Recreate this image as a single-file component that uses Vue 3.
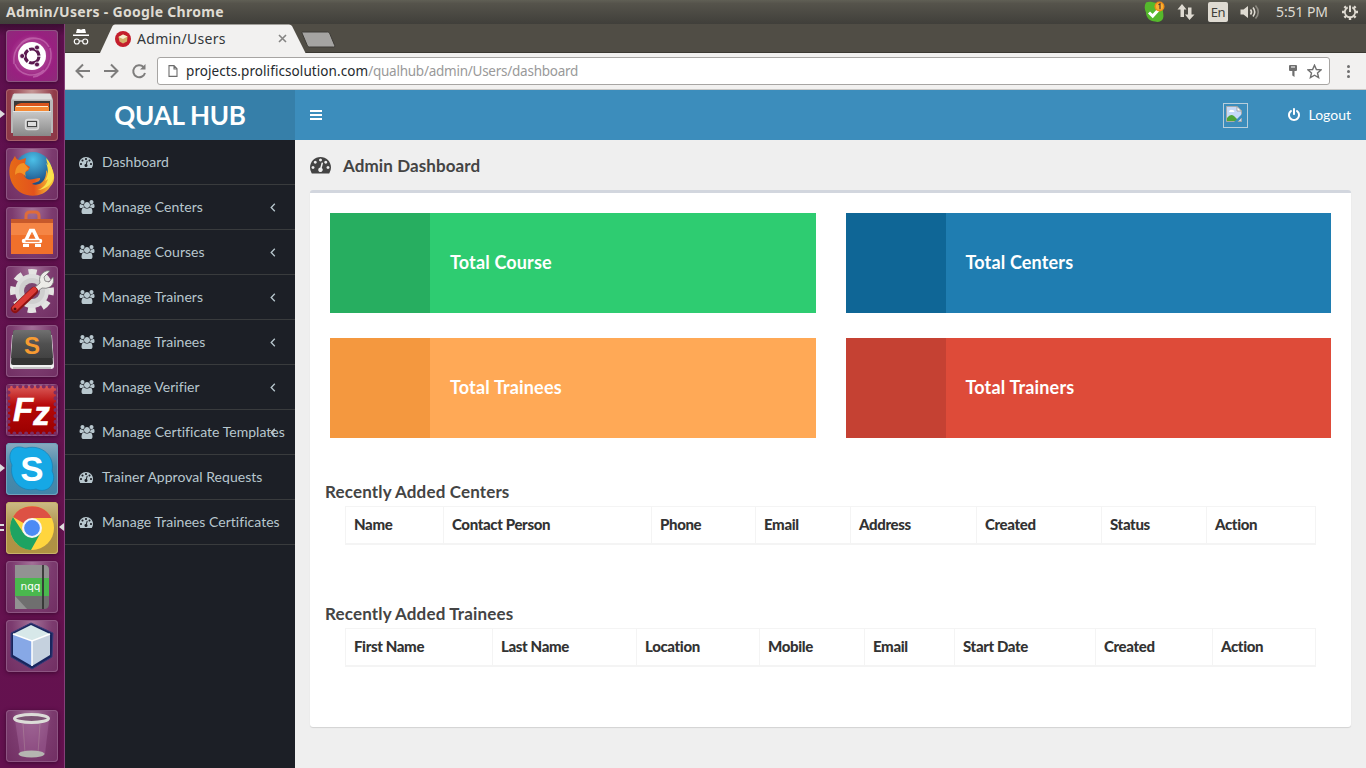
<script setup>
const menu = [
  { label: 'Dashboard', icon: 'gauge' },
  { label: 'Manage Centers', icon: 'group', sub: true },
  { label: 'Manage Courses', icon: 'group', sub: true },
  { label: 'Manage Trainers', icon: 'group', sub: true },
  { label: 'Manage Trainees', icon: 'group', sub: true },
  { label: 'Manage Verifier', icon: 'group', sub: true },
  { label: 'Manage Certificate Templates', icon: 'group', sub: true },
  { label: 'Trainer Approval Requests', icon: 'gauge' },
  { label: 'Manage Trainees Certificates', icon: 'gauge' },
]
const cards = [
  { label: 'Total Course', tone: 'green' },
  { label: 'Total Centers', tone: 'blue' },
  { label: 'Total Trainees', tone: 'orange' },
  { label: 'Total Trainers', tone: 'red' },
]
const centers = ['Name', 'Contact Person', 'Phone', 'Email', 'Address', 'Created', 'Status', 'Action']
const trainees = ['First Name', 'Last Name', 'Location', 'Mobile', 'Email', 'Start Date', 'Created', 'Action']
const gauge = 'M384 1152q0-53-37.5-90.5t-90.5-37.5-90.5 37.5-37.5 90.5 37.5 90.5 90.5 37.5 90.5-37.5 37.5-90.5zm192-448q0-53-37.5-90.5t-90.5-37.5-90.5 37.5-37.5 90.5 37.5 90.5 90.5 37.5 90.5-37.5 37.5-90.5zm428 481l101-382q6-26-7.5-48.5t-38.5-29.5-48 6.5-30 39.5l-101 382q-60 5-107 43.5t-63 98.5q-20 77 20 146t117 89 146-20 89-117q16-60-6-117t-72-91zm660-33q0-53-37.5-90.5t-90.5-37.5-90.5 37.5-37.5 90.5 37.5 90.5 90.5 37.5 90.5-37.5 37.5-90.5zm-640-640q0-53-37.5-90.5t-90.5-37.5-90.5 37.5-37.5 90.5 37.5 90.5 90.5 37.5 90.5-37.5 37.5-90.5zm448 192q0-53-37.5-90.5t-90.5-37.5-90.5 37.5-37.5 90.5 37.5 90.5 90.5 37.5 90.5-37.5 37.5-90.5zm320 448q0 261-141 483-19 29-54 29h-1402q-35 0-54-29-141-221-141-483 0-182 71-348t191-286 286-191 348-71 348 71 286 191 191 286 71 348z'
const group = 'M657 896q-162 5-265 128h-134q-82 0-138-40.5t-56-118.5q0-353 124-353 6 0 43.5 21t97.5 42.5 119 21.5q67 0 133-23-5 37-5 66 0 159 90 293zm1071 637q0 120-73 189.5t-194 69.5h-874q-121 0-194-69.5t-73-189.5q0-53 3.5-103.5t14-109 26.5-108.5 43-97.5 62-81 85.5-53.5 111.5-20q10 0 43 21.5t73 48 107 48 135 21.5 135-21.5 107-48 73-48 43-21.5q61 0 111.5 20t85.5 53.5 62 81 43 97.5 26.5 108.5 14 109 3.5 103.5zm-1024-1277q0 106-75 181t-181 75-181-75-75-181 75-181 181-75 181 75 75 181zm704 384q0 159-112.5 271.5t-271.5 112.5-271.5-112.5-112.5-271.5 112.5-271.5 271.5-112.5 271.5 112.5 112.5 271.5zm576 225q0 78-56 118.5t-138 40.5h-134q-103-123-265-128 90-134 90-293 0-29-5-66 66 23 133 23 59 0 119-21.5t97.5-42.5 43.5-21q124 0 124 353zm-128-609q0 106-75 181t-181 75-181-75-75-181 75-181 181-75 181 75 75 181z'
const power = 'M1664 896q0 156-61 298t-164 245-245 164-298 61-298-61-245-164-164-245-61-298q0-182 80.5-343t226.5-270q43-32 95.5-25t83.5 50q32 42 24.5 94.5t-49.5 84.5q-98 74-151.5 181t-53.5 228q0 104 40.5 198.5t109.5 163.5 163.5 109.5 198.5 40.5 198.5-40.5 163.5-109.5 109.5-163.5 40.5-198.5q0-121-53.5-228t-151.5-181q-42-32-49.5-84.5t24.5-94.5q31-43 84-50t95 25q146 109 226.5 270t80.5 343zm-640-768v640q0 52-38 90t-90 38-90-38-38-90v-640q0-52 38-90t90-38 90 38 38 90z'
</script>

<template>
  <div class="desktop">
    <header class="panel">
      <span class="win-title">Admin/Users - Google Chrome</span>
      <div class="tray">
        <svg class="t-skype" width="24" height="24" viewBox="0 0 24 24">
          <path d="M4 2.500C7 1 10 2 12 2.500c5 0 9 4 9 9 0 2 1 4 0 7s-5 4-8 3c-5 0-9-4-9-9-1.500-3-2-7 0-10z" fill="#55b82c" />
          <path d="M7 12.500l3.700 3.500 6.500-7" fill="none" stroke="#fff" stroke-width="3" />
          <circle cx="17.500" cy="6.500" r="5" fill="#f08b16" /><circle cx="17.500" cy="6.500" r="3.600" fill="#f9b233" />
          <path d="M16.500 4.800l1.500-1v5.500" fill="none" stroke="#533" stroke-width="1.200" />
        </svg>
        <svg class="t-net" width="18" height="18" viewBox="0 0 18 18" fill="#dfdbd2">
          <path d="M5 1L0.500 6.500H3.500V14H7V6.500H9.500zM12.500 17l5-5.500H14.500V4.500H11V11.500H8z" />
        </svg>
        <span class="lang">En</span>
        <svg class="t-vol" width="20" height="16" viewBox="0 0 20 16" fill="none">
          <path d="M0.500 5.500H3.500L8 2V14L3.500 10.500H0.500z" fill="#dfdbd2" />
          <path d="M10.500 5.500q2 2.500 0 5M13 3.500q3.500 4.500 0 9" stroke="#dfdbd2" stroke-width="1.600" />
          <path d="M15.500 1.500q5.500 6.500 0 13" stroke="#8a877f" stroke-width="1.600" />
        </svg>
        <span class="clock">5:51 PM</span>
        <svg class="t-gear" width="16" height="16" viewBox="0 0 16 16" fill="none" stroke="#dfdbd2">
          <path d="M5.700 3.400A5.200 5.200 0 1 0 10.300 3.400" stroke-width="1.800" />
          <path d="M8 1.500V8" stroke-width="2" />
          <path d="M4 4L2.400 2.400M2.800 8H0M4 12L2.400 13.600M8 13.200V16M12 12l1.600 1.600M13.200 8H16M12 4l1.600-1.600" stroke-width="2.400" />
        </svg>
      </div>
    </header>

    <div class="workspace">
      <nav class="launcher">
        <div class="tile dash">
          <svg viewBox="0 0 52 52">
            <g fill="none" stroke="#d58ac4" opacity=".5"><path d="M8 34C6 18 18 6 34 9M44 18c4 14-4 27-17 29M15 13c8-8 23-6 28 4M38 40c-10 9-25 5-29-6" stroke-width="1.500" /></g>
            <circle cx="26" cy="26" r="14" fill="#fff" />
            <circle cx="26" cy="26" r="7" fill="none" stroke="#5b1950" stroke-width="3.200" stroke-dasharray="13.200 1.460" stroke-dashoffset="-.7" />
            <g fill="#5b1950" stroke="#fff" stroke-width=".8"><circle cx="16.200" cy="26" r="2.500" /><circle cx="31" cy="17.500" r="2.500" /><circle cx="31" cy="34.500" r="2.500" /></g>
          </svg>
        </div>
        <div class="tile files">
          <i class="pip"></i>
          <svg viewBox="0 0 52 52">
            <defs><linearGradient id="metal" x1="0" y1="0" x2="0" y2="1"><stop offset="0" stop-color="#c9c9c9" /><stop offset="1" stop-color="#898989" /></linearGradient></defs>
            <path d="M7 5h38l2 6v33H5V11z" fill="#b9b9b9" /><path d="M8 4.500h36l2 6H6z" fill="#dedede" />
            <path d="M8 12h36v12H8z" fill="#393939" />
            <path d="M12 15l3-1h28v8H9v-5z" fill="#d9541c" /><path d="M9 18h34v5H9z" fill="#f58a35" /><path d="M10 17.500h32" stroke="#fff0cf" />
            <path d="M7 22h38v25H7z" fill="url(#metal)" /><path d="M7 22.500h38" stroke="#e4e4e4" />
            <rect x="19.500" y="30.500" width="13" height="10" rx="2.500" fill="#bbb" stroke="#ddd" stroke-width="1.400" />
            <rect x="21.500" y="32.500" width="9" height="5" fill="#ddd" stroke="#444" />
          </svg>
        </div>
        <div class="tile">
          <svg viewBox="0 0 52 52">
            <defs>
              <radialGradient id="globe" cx=".5" cy=".2" r=".7"><stop offset="0" stop-color="#4cc0e8" /><stop offset="1" stop-color="#17447e" /></radialGradient>
              <linearGradient id="fox" x1="0" y1="0" x2="1" y2="0"><stop offset="0" stop-color="#e66a16" /><stop offset=".55" stop-color="#e3531c" /><stop offset="1" stop-color="#f9d33a" /></linearGradient>
            </defs>
            <circle cx="27" cy="23" r="19" fill="url(#globe)" />
            <path d="M5 14C7 12 8 9 9 8c1 3 3 4 5 4l6-2-1 6 5 3-2 4c-3 0-5 3-3 6 4 5 9 1 15 1 1 4-5 4-8 6 9 3 15-5 14-14 2 2 2 5 2 7 3-6 1-12-2-17 9 10 11 20 4 27-5 8-15 10-23 8C7 44 0 28 5 14z" fill="url(#fox)" />
            <path d="M40 15c3 6 2 13-1 18l3-2c-1 5-5 9-10 11 9-1 16-7 16-17l-1 2c0-7-3-13-7-17l2 7z" fill="#fae24c" />
            <path d="M9 27c4-4 8-2 11 2-2-6 1-7 3-8l-5-6c-5 0-9 4-9 12z" fill="#f39226" />
          </svg>
        </div>
        <div class="tile">
          <svg viewBox="0 0 52 52">
            <path d="M20 16V9q0-4 4-4h5q4 0 4 4v7" fill="none" stroke="#df6c3a" stroke-width="3" />
            <path d="M5 12h42v35H5z" fill="#f0702b" /><path d="M5 12h42v4H5z" fill="#c7592b" /><path d="M5 16h42v12H5z" fill="#f58545" />
            <path d="M20 33l4.500-9.500h3L32 33" fill="none" stroke="#fff" stroke-width="3.500" />
            <path d="M18 34h16" stroke="#fff" stroke-width="4.500" stroke-linecap="round" /><path d="M19.500 34h14" stroke="#f0702b" stroke-width="1.500" />
            <path d="M17 38.500h6M29 38.500h6" stroke="#fff" stroke-width="3" />
          </svg>
        </div>
        <div class="tile">
          <svg viewBox="0 0 52 52">
            <circle cx="26" cy="25" r="19" fill="none" stroke="#e4e4e2" stroke-width="6" stroke-dasharray="8.200 6.724" stroke-dashoffset="4.100" />
            <circle cx="26" cy="25" r="14" fill="#eee" stroke="#ddd" stroke-width="6" /><circle cx="26" cy="25" r="13" fill="#cfcfcf" /><circle cx="26" cy="25" r="8" fill="#7c4871" />
            <path d="M28 22l6-5q-2-7 4-11 3-2 6-1l-6 6 1 4 4 1 4-5q2 6-3 10-4 2-8 1l-5 4z" fill="#ecece8" stroke="#777" stroke-width=".8" />
            <path d="M9 43l19-18" stroke="#8e1212" stroke-width="8" stroke-linecap="round" /><path d="M9 42l19-18" stroke="#dc3b35" stroke-width="5.500" stroke-linecap="round" />
            <circle cx="9" cy="43" r="1.500" fill="#501010" />
          </svg>
        </div>
        <div class="tile">
          <svg viewBox="0 0 52 52">
            <defs><linearGradient id="slab" x1="0" y1="0" x2="0" y2="1"><stop offset="0" stop-color="#707070" /><stop offset=".5" stop-color="#505050" /><stop offset="1" stop-color="#424242" /></linearGradient></defs>
            <path d="M6 10h40l2 31q0 3-3 3H7q-3 0-3-3z" fill="#f1f1f1" /><path d="M7 43h38" stroke="#999" />
            <path d="M9 5h34q2 0 2 2l2 31q0 2-2 2H7q-2 0-2-2L7 7q0-2 2-2z" fill="#333" /><path d="M9 5h34q2 0 2 2l2 26H5L7 7q0-2 2-2z" fill="url(#slab)" />
            <text x="26" y="29" text-anchor="middle" class="glyph s-sub">S</text>
          </svg>
        </div>
        <div class="tile">
          <svg viewBox="0 0 52 52">
            <defs><linearGradient id="fz" x1="0" y1="0" x2="0" y2="1"><stop offset="0" stop-color="#da5a58" /><stop offset=".4" stop-color="#b60808" /><stop offset="1" stop-color="#9b0000" /></linearGradient></defs>
            <rect x="2" y="2" width="48" height="48" rx="2" fill="url(#fz)" />
            <rect x="2.500" y="2.500" width="47" height="47" fill="none" stroke="#7c2c62" stroke-width="4" stroke-dasharray="0 5.875" stroke-linecap="round" />
            <text x="7" y="37" class="glyph fz">F</text><text x="27.200" y="41" class="glyph fz z">z</text>
          </svg>
        </div>
        <div class="tile skype">
          <i class="pip"></i>
          <svg viewBox="0 0 52 52">
            <path d="M7 6c5-4 10-1 13-1C37 1 49 14 46 28c3 6 2 12-3 17-4 3-9 3-13 1C15 50 3 37 6 22 3 16 3 10 7 6z" fill="#16a8e5" stroke="#1680b4" stroke-width=".7" />
            <text x="26" y="38" text-anchor="middle" class="glyph s-sky">S</text>
          </svg>
        </div>
        <div class="tile chrome">
          <i class="pip double"></i><i class="pip focus"></i>
          <svg viewBox="0 0 52 52">
            <circle cx="26" cy="26" r="22" fill="#ffd53e" />
            <path d="M26 26L7 15A22 22 0 0 1 45.500 16H26z" fill="#dd5144" />
            <path d="M7 15A22 22 0 0 0 25 48L34.500 31H17.400z" fill="#1ea362" />
            <circle cx="26" cy="26" r="10" fill="#f5f5f5" /><circle cx="26" cy="26" r="7.900" fill="#4c8bf5" />
          </svg>
        </div>
        <div class="tile">
          <svg viewBox="0 0 52 52">
            <path d="M9 4h29q5 0 5 5v34q0 5-5 5H9z" fill="#6f6f6f" /><path d="M9 4h29q5 0 5 5v8H9z" fill="#929292" /><path d="M9 35l12 13H9z" fill="#929292" />
            <path d="M9 17h34v18H9z" fill="#4ab84e" /><path d="M37 4v44" stroke="#343434" stroke-width="1.800" />
            <text x="24.500" y="29" text-anchor="middle" class="glyph nqq">nqq</text>
          </svg>
        </div>
        <div class="tile">
          <svg viewBox="0 0 52 52">
            <path d="M25 3l22 10-1 24-20 12L5 37V13z" fill="#18265e" stroke="#3a3a78" stroke-linejoin="round" />
            <path d="M25 5l19 9-18 7L7 14z" fill="#d7e8e9" /><path d="M7 14l19 7v25L7 35z" fill="#87a8e6" /><path d="M26 21l18-7v21L26 46z" fill="#c5d1de" />
            <path d="M7 14l19 7 18-7M26 21v25" fill="none" stroke="#fff" stroke-width="1.500" />
          </svg>
        </div>
        <div class="tile trash">
          <svg viewBox="0 0 52 52">
            <path d="M9 10l5 34q12 5 25 0l4-34z" fill="#a4679b" opacity=".45" /><path d="M17 14l2 29M34 14l-2 29" stroke="#ddb" opacity=".2" />
            <ellipse cx="25.500" cy="44" rx="13" ry="3.500" fill="#b5b5b1" />
            <ellipse cx="25.500" cy="8.500" rx="17" ry="4" fill="#7b5272" stroke="#dcdcd8" stroke-width="3" />
          </svg>
        </div>
      </nav>

      <section class="browser">
        <div class="tabs">
          <svg class="incog" width="18" height="18" viewBox="0 0 18 18" fill="#fff">
            <path d="M5 0h2l2 .7L11 0h2l1 4H4zM1 5.500h16v1.500H1z" /><g fill="none" stroke="#fff" stroke-width="1.200"><circle cx="4.800" cy="12.500" r="2.500" /><circle cx="13.200" cy="12.500" r="2.500" /><path d="M7.500 12h3" /></g>
          </svg>
          <div class="tab">
            <svg class="tab-bg" width="206" height="29" viewBox="0 0 206 29"><path d="M0 29L12.500 2q.7-1.500 2.500-1.500H189q2 0 3 1.500L205.500 29z" fill="#f2f1f0" /></svg>
            <svg class="favicon" width="16" height="16" viewBox="0 0 16 16"><circle cx="8" cy="8" r="8" fill="#c41e2c" /><path d="M3.500 6L8 3.500 12.500 5.500 12 10.500 8 12.500 4.500 10.500z" fill="#d3b069" /><path d="M3.500 6L8 3.500l4.500 2L8 8z" fill="#f8edcf" /></svg>
            <span class="tab-title">Admin/Users</span>
            <svg class="tab-x" width="9" height="9" viewBox="0 0 9 9"><path d="M1 1l7 7M8 1L1 8" stroke="#858483" stroke-width="1.600" /></svg>
          </div>
          <svg class="newtab" width="35" height="17" viewBox="0 0 35 17"><path d="M1.500 1h25q1.500 0 2 1l5.200 12.500q.5 1.500-1 1.500H8.500q-1.500 0-2-1L1 2q-.3-1 .5-1z" fill="#a5a4a2" stroke="#3d3b36" /></svg>
        </div>

        <div class="toolbar">
          <svg class="nav-icons" width="72" height="18" viewBox="0 0 72 18" fill="none" stroke="#7e7d7c" stroke-width="2">
            <path d="M15 9H2M8 2.500L1.500 9 8 15.500M29 9H42M36 2.500L42.500 9 36 15.500" />
            <path d="M68.500 5A6 6 0 1 0 70 11" /><path d="M70.500 2v5.500H65z" fill="#7e7d7c" stroke="none" />
          </svg>
          <div class="url">
            <svg width="10" height="12" viewBox="0 0 10 12" fill="none" stroke="#6d6d6d"><path d="M1 .6h5L9 3.800v7.600H1zM6 .6V4H9" stroke-width="1.100" /></svg>
            <span class="addr"><b>projects.prolificsolution.com</b>/qualhub/admin/Users/dashboard</span>
            <svg class="key" width="8" height="13" viewBox="0 0 8 13" fill="#6f6f6f"><path d="M1 0h6q1 0 1 1v4q0 1-1 1H5.500V12L3.300 10.500V6H1q-1 0-1-1V1q0-1 1-1z" /><path d="M2 2h4" stroke="#fff" /></svg>
            <svg class="star" width="15" height="15" viewBox="0 0 15 15"><path d="M7.500 1.200l1.900 4.300 4.600.4-3.500 3.100 1.100 4.600-4.100-2.400-4.100 2.400L4.500 9 1 5.900l4.600-.4z" fill="none" stroke="#6f6f6f" stroke-width="1.400" /></svg>
          </div>
          <div class="dots"><i></i><i></i><i></i></div>
        </div>

        <div class="page">
          <aside class="sidebar">
            <div class="brand">QUAL HUB</div>
            <a v-for="m in menu" :key="m.label" class="item">
              <svg v-if="m.icon === 'gauge'" class="mi" width="14" height="14" viewBox="0 0 1792 1792"><path :d="gauge" /></svg>
              <svg v-else class="mi wide" width="16" height="14" viewBox="0 0 2048 1792"><path :d="group" /></svg>
              <span>{{ m.label }}</span>
              <svg v-if="m.sub" class="angle" width="6" height="9" viewBox="0 0 6 9"><path d="M4.800.8L1.200 4.500l3.600 3.700" /></svg>
            </a>
          </aside>

          <main class="main">
            <div class="navbar">
              <div class="burger"><i></i><i></i><i></i></div>
              <div class="user">
                <div class="broken">
                  <svg width="16" height="16" viewBox="0 0 16 16">
                    <path d="M.5.500h10.500L15.500 5v10.500H.5z" fill="#c6d9f7" stroke="#aaa" />
                    <path d="M1 12q3.500-5 7-2T12 15H1z" fill="#4fa535" /><path d="M3 5.500q1-2.500 3-1.500 2-.5 2.500 2H3z" fill="#fff" />
                    <path d="M11 .5V5h4.500z" fill="#fff" stroke="#999" stroke-width=".8" /><path d="M8 16l8-8v3.500L11.500 16z" fill="#3c8dbc" />
                  </svg>
                </div>
                <div class="logout"><svg width="14" height="14" viewBox="0 0 1792 1792" fill="#fff"><path :d="power" /></svg><span>Logout</span></div>
              </div>
            </div>

            <h1 class="heading"><svg width="21" height="21" viewBox="0 0 1792 1792" fill="#444"><path :d="gauge" /></svg>Admin Dashboard</h1>

            <div class="box">
              <div class="cards">
                <div v-for="c in cards" :key="c.label" class="card" :class="c.tone"><div class="swatch"></div><span>{{ c.label }}</span></div>
              </div>
              <h2>Recently Added Centers</h2>
              <div class="grid g1"><div v-for="h in centers" :key="h">{{ h }}</div></div>
              <h2 class="second">Recently Added Trainees</h2>
              <div class="grid g2"><div v-for="h in trainees" :key="h">{{ h }}</div></div>
            </div>
          </main>
        </div>
      </section>
    </div>
  </div>
</template>

<style>
html, body { margin: 0; overflow: hidden; }
</style>

<style scoped>
* { box-sizing: border-box; }
svg { display: block; flex: none; }
.desktop { width: 1366px; height: 768px; display: flex; flex-direction: column; overflow: hidden; font-family: Lato, sans-serif; font-size: 14px; }
.panel { height: 24px; display: flex; justify-content: space-between; align-items: center; background: linear-gradient(#605f55, #55534b 15%, #403f3a); font-family: "Noto Sans", sans-serif; color: #dfdbd2; padding: 0 8px 0 6px; white-space: nowrap; }
.win-title { font-weight: 700; font-size: 14px; letter-spacing: .3px; margin-bottom: 2px; }
.tray { display: flex; align-items: center; }
.t-skype { margin-right: 11px; }
.t-net { margin-right: 13px; }
.lang { width: 20px; height: 20px; line-height: 20px; border-radius: 2px; background: #dfdbd2; color: #403f3a; text-align: center; font-size: 13px; letter-spacing: -.5px; margin-right: 12px; }
.t-vol { margin-right: 16px; }
.clock { font-size: 14px; width: 53px; margin: 0 13px 2px 0; letter-spacing: -.1px; }
.workspace { flex: 1; display: flex; min-height: 0; }
.launcher { width: 65px; padding: 6px 0 6px 6px; display: flex; flex-direction: column; gap: 7px; background: linear-gradient(#3c0d33, #5e104e 12px, #65134f 60%, #64114f); border-right: 1px solid #854079; }
.tile { position: relative; width: 52px; height: 52px; flex: none; border-radius: 4px; background: radial-gradient(ellipse at 50% 0, #a47299, #7c3b6f 55%, #702e62); box-shadow: inset 0 0 0 1px #8d5582, 0 1px 4px #3e0832; }
.tile svg { width: 52px; height: 52px; }
.tile.dash { background: radial-gradient(circle, #c66aae, #992080 60%, #8d2b7a); }
.tile.files { background: radial-gradient(ellipse at 50% 0, #c79a99, #913b49 60%, #8b3746); box-shadow: inset 0 0 0 1px #a8616b, 0 1px 4px #3e0832; }
.tile.skype { background: linear-gradient(#8baabf, #4a8bab 45%, #4185a9); box-shadow: inset 0 0 0 1px #6fa3bd, 0 1px 4px #3e0832; }
.tile.chrome { background: linear-gradient(#ccbb85, #ad9149 50%, #b09242); box-shadow: inset 0 0 0 1px #c9b268, 0 1px 4px #3e0832; }
.trash { margin-top: auto; }
.pip { position: absolute; left: -6px; top: 21px; border-left: 5px solid #ddd; border-top: 4.500px solid transparent; border-bottom: 4.500px solid transparent; }
.pip.double { width: 4px; height: 7px; border: 0; border-top: 2px solid #ddd; border-bottom: 2px solid #ddd; top: 22px; }
.pip.focus { left: auto; right: -6px; border-left: 0; border-right: 5px solid #ddd; }
.glyph { font-family: "Liberation Sans", sans-serif; font-weight: 700; fill: #fff; }
.s-sub { font-size: 24px; fill: #f79b32; }
.fz { font-size: 33px; font-style: italic; stroke: #fff; stroke-width: .6; }
.s-sky { font-size: 35px; }
.nqq { font-family: "DejaVu Sans", sans-serif; font-size: 10.500px; font-weight: 400; }
.browser { flex: 1; min-width: 0; display: flex; flex-direction: column; font-family: "Noto Sans", sans-serif; }
.tabs { height: 29px; display: flex; background: #504d45; border-bottom: 1px solid #3b3933; }
.incog { margin: 5px 0 0 7px; }
.tab { position: relative; width: 206px; height: 29px; margin-left: 10px; display: flex; align-items: center; padding-left: 15px; }
.tab-bg { position: absolute; left: 0; top: 0; }
.favicon, .tab-title, .tab-x { position: relative; }
.tab-title { margin-left: 6px; font-size: 14px; color: #33373a; width: 141px; letter-spacing: .3px; }
.newtab { margin: 7px 0 0 -5px; }
.toolbar { height: 37px; display: flex; align-items: center; background: #f2f1f0; border-bottom: 1px solid #c9c8c6; padding: 0 12px 0 10px; }
.nav-icons { margin-right: 10px; }
.url { width: 1173px; height: 28px; background: #fff; border: 1px solid #a7a5a3; border-radius: 3px; display: flex; align-items: center; padding: 0 7px 0 10px; }
.addr { margin-left: 8px; font-size: 13.500px; color: #999; flex: 1; white-space: nowrap; letter-spacing: -.25px; }
.addr b { font-weight: 400; color: #252a2e; letter-spacing: .08px; }
.key { margin-right: 10px; }
.dots { display: flex; flex-direction: column; gap: 2px; margin-left: 17px; }
.dots i { width: 3px; height: 3px; border-radius: 50%; background: #6f6f6f; }
.page { flex: 1; display: flex; min-height: 0; font-family: Lato, sans-serif; }
.sidebar { width: 230px; background: #1c1f26; }
.brand { height: 50px; line-height: 50px; background: #367fa9; color: #fff; text-align: center; font-size: 26px; font-weight: 700; letter-spacing: -.25px; }
.item { position: relative; height: 45px; border-bottom: 1px solid #393b3d; display: flex; align-items: center; padding-left: 14px; color: #b8c7ce; white-space: nowrap; }
.item span { margin-bottom: 2px; letter-spacing: .03px; }
.mi { fill: #b8c7ce; margin-right: 9px; }
.mi.wide { margin-right: 7px; }
.angle { position: absolute; left: 205px; top: 18px; fill: none; stroke: #b8c7ce; stroke-width: 1.300; }
.main { flex: 1; min-width: 0; background: #efefef; }
.navbar { height: 50px; background: #3c8dbc; display: flex; align-items: center; justify-content: space-between; padding: 0 15px; color: #fff; }
.burger { display: flex; flex-direction: column; gap: 2px; }
.burger i { width: 12px; height: 2px; background: #fff; }
.user { display: flex; align-items: center; }
.broken { width: 25px; height: 25px; border: 1px solid #b8cedb; padding: 2px; margin-right: 39px; }
.logout { display: flex; align-items: center; gap: 7px; }
.logout span { margin-bottom: 2px; }
.heading { margin: 0; height: 50px; display: flex; align-items: center; gap: 12px; padding: 1px 0 0 15px; font-size: 17px; font-weight: 700; color: #444; letter-spacing: .1px; }
.heading svg { margin-bottom: 2px; }
.box { margin: 0 15px; height: 537px; background: #fff; border-top: 3px solid #d2d6de; border-radius: 3px; box-shadow: 0 1px 1px rgba(0, 0, 0, .12); padding: 20px; }
.cards { display: grid; grid-template-columns: 1fr 1fr; gap: 25px 30px; }
.card { height: 100px; display: flex; align-items: center; color: #fff; font-size: 18px; font-weight: 700; letter-spacing: .16px; }
.card span { margin-bottom: 2px; }
.swatch { width: 100px; height: 100px; margin-right: 20px; }
.green { background: #2ecc71; } .green .swatch { background: #27ae60; }
.blue { background: #1f7db1; } .blue .swatch { background: #0f6696; }
.orange { background: #ffa956; } .orange .swatch { background: #f4983f; }
.red { background: #de4b39; } .red .swatch { background: #c54133; }
h2 { margin: 43px 0 0 -5px; height: 25px; line-height: 22px; font-size: 17px; font-weight: 700; color: #444; letter-spacing: .15px; }
h2.second { margin-top: 58px; }
.grid { display: grid; margin-left: 15px; width: 971px; height: 39px; border: 1px solid #f4f4f4; border-bottom-width: 2px; }
.grid div { padding-left: 8px; line-height: 34px; height: 36px; font-size: 15px; letter-spacing: -.36px; font-weight: 900; color: #333; white-space: nowrap; }
.grid div + div { border-left: 1px solid #f4f4f4; }
.g1 { grid-template-columns: 97px 208px 104px 95px 126px 125px 105px 109px; }
.g2 { grid-template-columns: 146px 144px 123px 105px 90px 141px 117px 103px; }
</style>
